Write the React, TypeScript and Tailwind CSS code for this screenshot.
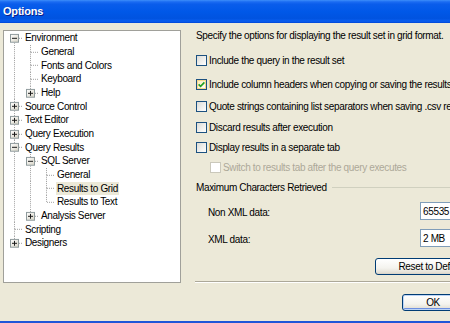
import React from "react";

type TreeNode = { label: string; children?: TreeNode[]; open?: boolean; selected?: boolean };

const tree: TreeNode[] = [
  {
    label: "Environment",
    open: true,
    children: [
      { label: "General" },
      { label: "Fonts and Colors" },
      { label: "Keyboard" },
      { label: "Help", children: [{ label: "Topics" }] },
    ],
  },
  { label: "Source Control", children: [{ label: "General" }] },
  { label: "Text Editor", children: [{ label: "General" }] },
  { label: "Query Execution", children: [{ label: "General" }] },
  {
    label: "Query Results",
    open: true,
    children: [
      {
        label: "SQL Server",
        open: true,
        children: [
          { label: "General" },
          { label: "Results to Grid", selected: true },
          { label: "Results to Text" },
        ],
      },
      { label: "Analysis Server", children: [{ label: "General" }] },
    ],
  },
  { label: "Scripting" },
  { label: "Designers", children: [{ label: "General" }] },
];

type Row = {
  label: string;
  guides: boolean[];
  hasNext: boolean;
  hasKids: boolean;
  open: boolean;
  selected: boolean;
  first: boolean;
};

function flatten(nodes: TreeNode[], guides: boolean[], out: Row[]) {
  nodes.forEach((n, i) => {
    const hasNext = i < nodes.length - 1;
    out.push({
      label: n.label,
      guides,
      hasNext,
      hasKids: !!n.children,
      open: !!n.open,
      selected: !!n.selected,
      first: out.length === 0,
    });
    if (n.children && n.open) flatten(n.children, [...guides, hasNext], out);
  });
}

const rows: Row[] = [];
flatten(tree, [], rows);

const dot = { stroke: "#A0A0A0", strokeWidth: 1, strokeDasharray: "1 1" };

function Guide({ on }: { on: boolean }) {
  return (
    <svg className="h-full w-4 shrink-0" viewBox="0 0 16 14" preserveAspectRatio="none">
      {on && <line x1="7.5" y1="0" x2="7.5" y2="14" {...dot} />}
    </svg>
  );
}

function Joint({ row }: { row: Row }) {
  const top = row.hasKids ? 3 : 7.5;
  const bottom = row.hasKids ? 12 : 7.5;
  return (
    <svg className="h-full w-4 shrink-0" viewBox="0 0 16 14" preserveAspectRatio="none">
      {!row.first && <line x1="7.5" y1="0" x2="7.5" y2={top} {...dot} />}
      {row.hasNext && <line x1="7.5" y1={bottom} x2="7.5" y2="14" {...dot} />}
      <line x1={row.hasKids ? 12 : 8} y1="7.5" x2="16" y2="7.5" {...dot} />
      {row.hasKids && (
        <>
          <defs>
            <linearGradient id="exp" x1="0" y1="0" x2="1" y2="1">
              <stop offset="0" stopColor="#FFFFFF" />
              <stop offset="1" stopColor="#D8D4C6" />
            </linearGradient>
          </defs>
          <rect x="3.5" y="3.5" width="8" height="8" fill="url(#exp)" stroke="#8E9A9C" />
          <line x1="5" y1="7.5" x2="10" y2="7.5" stroke="#1A1A1A" />
          {!row.open && <line x1="7.5" y1="5" x2="7.5" y2="10" stroke="#1A1A1A" />}
        </>
      )}
    </svg>
  );
}

function CheckBox({ checked, disabled }: { checked?: boolean; disabled?: boolean }) {
  return (
    <span
      className={
        disabled
          ? "flex h-[11px] w-[11px] shrink-0 items-center justify-center border border-[#CAC8BB] bg-white"
          : checked
          ? "flex h-[11px] w-[11px] shrink-0 items-center justify-center border border-[#1C5180] bg-[linear-gradient(135deg,#FBEBB8,#FFFFFF)] shadow-[inset_0_0_0_1px_#F6D98A]"
          : "flex h-[11px] w-[11px] shrink-0 items-center justify-center border border-[#1C5180] bg-[linear-gradient(135deg,#DCDCD7,#FFFFFF)]"
      }
    >
      {checked && (
        <svg width="7" height="7" viewBox="0 0 7 7">
          <path d="M0.6 3.4 L2.6 5.4 L6.4 1.4" stroke="#21A121" strokeWidth="1.6" fill="none" />
        </svg>
      )}
    </span>
  );
}

function Option({ label, checked, disabled }: { label: string; checked?: boolean; disabled?: boolean }) {
  return (
    <div className={disabled ? "flex h-[14px] items-center gap-[2px] pl-[14px] text-[#ACA899]" : "flex h-[14px] items-center gap-[2px]"}>
      <CheckBox checked={checked} disabled={disabled} />
      <span className="whitespace-nowrap">{label}</span>
    </div>
  );
}

const xpButton =
  "flex h-[17px] shrink-0 items-center justify-center rounded-[3px] border border-[#003C74] bg-[linear-gradient(180deg,#FFFFFF_0%,#F4F3EE_60%,#E3E0D6_90%,#D6D0C5_100%)]";

export default function App() {
  return (
    <div className="h-[323px] w-[450px] overflow-hidden bg-[#ECE9D8] font-['Liberation_Sans',Arial,sans-serif] text-[10px] tracking-[-0.35px] text-black">
      <div className="flex h-[323px] w-[500px] flex-col">
        <div className="flex h-[23px] shrink-0 items-start bg-[linear-gradient(180deg,#3D8EFA_0%,#1B6CF2_8%,#0A5DEB_18%,#0058E8_50%,#0053E0_80%,#0A5EF0_92%,#0046D6_100%)] pl-[3px] pt-[5px]">
          <span className="text-[11px] font-bold leading-[13px] tracking-[-0.2px] text-white [text-shadow:1px_1px_0_#0A1E8A]">Options</span>
        </div>

        <div className="flex min-h-0 flex-1 items-start pl-[3px]">
          <div className="mt-[7px] h-[253px] w-[178px] shrink-0 border border-[#A0A09A] bg-white pl-[3px]">
            {rows.map((r, i) => (
              <div key={i} className="flex h-[13.66px] items-stretch">
                {r.guides.map((g, j) => (
                  <Guide key={j} on={g} />
                ))}
                <Joint row={r} />
                <div className="flex items-center pl-[1px]">
                  <span className={r.selected ? "whitespace-nowrap bg-[#ECE9D8] px-[1px] leading-[13px]" : "whitespace-nowrap px-[1px] leading-[13px]"}>
                    {r.label}
                  </span>
                </div>
              </div>
            ))}
          </div>

          <div className="ml-[15px] flex w-[292px] shrink-0 flex-col">
            <div className="mt-[5px] flex h-[14px] items-center whitespace-nowrap">
              Specify the options for displaying the result set in grid format.
            </div>
            <div className="mt-[11px]">
              <Option label="Include the query in the result set" />
            </div>
            <div className="mt-[10px]">
              <Option label="Include column headers when copying or saving the results" checked />
            </div>
            <div className="mt-[8px]">
              <Option label="Quote strings containing list separators when saving .csv results" />
            </div>
            <div className="mt-[7px]">
              <Option label="Discard results after execution" />
            </div>
            <div className="mt-[6px]">
              <Option label="Display results in a separate tab" />
            </div>
            <div className="mt-[6px]">
              <Option label="Switch to results tab after the query executes" disabled />
            </div>
            <div className="mt-[6px] flex h-[14px] items-center">
              <span className="whitespace-nowrap">Maximum Characters Retrieved</span>
              <span className="ml-[5px] h-0 flex-1 border-t border-[#D0D0BF]" />
            </div>
            <div className="mt-[8px] flex h-[18px] items-center justify-between pl-[12px]">
              <span className="pt-[2px]">Non XML data:</span>
              <div className="flex h-[18px] w-[68px] items-center border border-[#7F9DB9] bg-white pl-[2px]">65535</div>
            </div>
            <div className="mt-[9px] flex h-[18px] items-center justify-between pl-[12px]">
              <span className="pt-[2px]">XML data:</span>
              <div className="flex h-[18px] w-[68px] items-center border border-[#7F9DB9] bg-white pl-[2px]">2 MB</div>
            </div>
            <div className="mt-[11px] flex justify-end">
              <button className={`${xpButton} w-[113px]`}>Reset to Default</button>
            </div>
            <div className="ml-[-1px] mt-[6px] h-[2px] border-t border-[#ACA899] bg-white" />
            <div className="mt-[11px] flex gap-[6px] pl-[206px]">
              <button className={`${xpButton} w-[62px] shadow-[inset_0_0_0_1px_#BCD4F6,inset_-1px_-1px_0_1px_#6D8FE0]`}>OK</button>
              <button className={`${xpButton} w-[62px]`}>Cancel</button>
            </div>
          </div>
        </div>

        <div className="h-[2px] shrink-0 bg-[#1F56D8]" />
      </div>
    </div>
  );
}
